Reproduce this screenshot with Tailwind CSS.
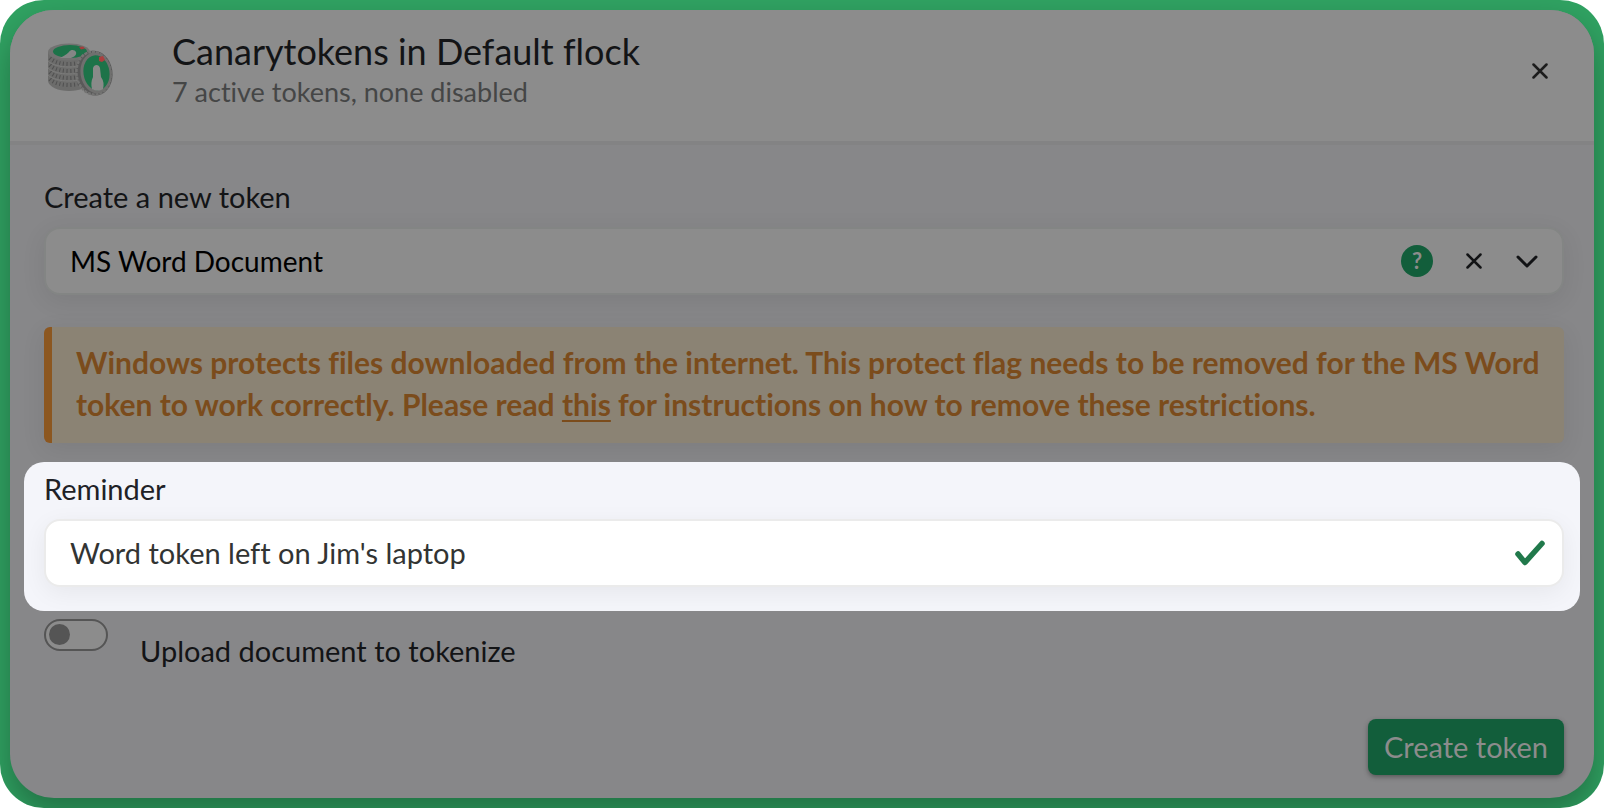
<!DOCTYPE html>
<html lang="en">
<head>
    <meta charset="UTF-8">
    <meta name="viewport" content="width=device-width, initial-scale=1.0">
    <title>Canarytokens</title>
    <script src="https://cdn.jsdelivr.net/npm/@tailwindcss/browser@4"></script>
</head>
<body class="bg-white font-['Lato',sans-serif] [font-variant-ligatures:none] text-[29px] leading-[42px] text-[#131416]">
    <div class="min-h-screen flex flex-col p-[10px] rounded-[44px] overflow-hidden bg-[#30a262]">
        <main class="flex-1 flex flex-col rounded-[44px] bg-[#878789] shadow-[0_16px_32px_rgba(0,0,0,0.3)]">
            <!-- Header -->
            <header class="flex items-start bg-[#8c8c8c] border-b-4 border-[#838384] rounded-t-[44px] pl-9 pr-[46px] h-[135px] shrink-0">
                <svg class="w-[70px] h-[58px] mt-[31px] shrink-0" viewBox="0 0 70 58" aria-hidden="true">
                    <!-- stack of coins -->
                    <path d="M2 11v29c1 6 10 10 21 10s20-4 21-10V11z" fill="#6c6c6b"/>
                    <g fill="none" stroke="#505050" stroke-width="4" stroke-dasharray="1 2.6">
                        <path d="M4 17c4 4 11 6 19 6s15-2 19-6"/>
                        <path d="M4 24c4 4 11 6 19 6s15-2 19-6"/>
                        <path d="M4 31c4 4 11 6 19 6s15-2 19-6"/>
                        <path d="M4 38c4 4 11 6 19 6s15-2 19-6"/>
                    </g>
                    <g fill="none" stroke="#7c7c7b" stroke-width="1">
                        <path d="M2 20c4 4 12 6 21 6s17-2 21-6"/>
                        <path d="M2 27c4 4 12 6 21 6s17-2 21-6"/>
                        <path d="M2 34c4 4 12 6 21 6s17-2 21-6"/>
                    </g>
                    <ellipse cx="23" cy="11" rx="21" ry="8.5" fill="#727271"/>
                    <ellipse cx="24" cy="10.500" rx="17" ry="6.500" fill="#1d7349"/>
                    <path d="M14 17c3-2 6-3 9-6 2-3 6-2 7 0 1 3-2 5-5 6z" fill="#868686"/>
                    <path d="M33 6l4-.5 2 2-4 1z" fill="#a33c3c"/>
                    <!-- coin in front -->
                    <g transform="rotate(-8 49 32)">
                        <ellipse cx="48.500" cy="32" rx="18" ry="22.500" fill="#595959"/>
                        <ellipse cx="47.500" cy="32" rx="17" ry="21.500" fill="none" stroke="#747473" stroke-width="2.500" stroke-dasharray="3 1"/>
                        <ellipse cx="50" cy="32" rx="15.500" ry="20.500" fill="#70706f"/>
                        <ellipse cx="50.500" cy="32" rx="13" ry="17.500" fill="#1d7349"/>
                    </g>
                    <path d="M47 27c1-4 6-4 7 0l1 9c3 4 3 8 2 12-3 2-7 2-11 0-1-4-1-8 1-12z" fill="#8a8a89"/>
                    <path d="M53 16l4-1 2 4-3 2-3-1z" fill="#ad3e3e"/>
                </svg>
                <div class="flex-1 ml-14 mt-5">
                    <h1 class="text-[36px] leading-[42px]">Canarytokens in Default flock</h1>
                    <p class="text-[27px] leading-10 text-[#454646]">7 active tokens, none disabled</p>
                </div>
                <button class="mt-[53px] p-0" aria-label="Close">
                    <svg class="w-4 h-4" viewBox="0 0 16 16" fill="none" stroke="#1c1c1c" stroke-width="2.500" stroke-linecap="round"><path d="M1.500 1.500l13 13M14.500 1.500l-13 13"/></svg>
                </button>
            </header>

            <form class="flex-1 flex flex-col pl-[34px] pr-[30px] pt-[31px]" onsubmit="return false">
                <!-- Token type -->
                <label for="token-type">Create a new token</label>
                <div class="grid items-center mt-[9px] rounded-2xl bg-[#8c8c8c] border-2 border-[#838584] shadow-[0_6px_24px_rgba(0,0,0,0.08)]">
                    <select id="token-type" class="col-start-1 row-start-1 appearance-none w-full h-16 pl-6 pr-44 text-[28px] text-black outline-none">
                        <option>MS Word Document</option>
                    </select>
                    <div class="col-start-1 row-start-1 justify-self-end flex items-center pr-6">
                        <button type="button" class="grid place-items-center w-8 h-8 rounded-full bg-[#125e3b] text-[#8c8c8c] text-[22px] leading-8 font-bold" aria-label="Help">?</button>
                        <button type="button" class="ml-[33px]" aria-label="Clear">
                            <svg class="w-4 h-4" viewBox="0 0 16 16" fill="none" stroke="#121315" stroke-width="2.500" stroke-linecap="round"><path d="M1.500 1.500l13 13M14.500 1.500l-13 13"/></svg>
                        </button>
                        <svg class="ml-[34px] w-[22px] h-[14px]" viewBox="0 0 22 14" fill="none" stroke="#121315" stroke-width="3" stroke-linecap="round" stroke-linejoin="round"><path d="M2 3l9 9 9-9"/></svg>
                    </div>
                </div>

                <div class="mt-8 px-6 pt-[14px] pb-[18px] rounded-md border-l-8 border-[#8c5720] bg-[#8b8374] shadow-[0_6px_24px_rgba(0,0,0,0.08)] text-[30px] font-bold text-[#7b4c1c]">
                    Windows protects files downloaded from the internet. This protect flag needs to be removed for the MS Word token to work correctly. Please read <a href="#" class="underline decoration-2 underline-offset-4">this</a> for instructions on how to remove these restrictions.
                </div>

                <!-- Highlighted step -->
                <div class="flex flex-col mt-[19px] -ml-5 -mr-4 pl-5 pr-4 pt-[6px] pb-6 rounded-[20px] bg-[#f4f5fa] text-[#202126]">
                    <label for="reminder">Reminder</label>
                    <div class="grid items-center mt-[9px] rounded-2xl bg-white border-2 border-[#ebebeb] shadow-[0_6px_24px_rgba(0,0,0,0.06)]">
                        <input id="reminder" type="text" value="Word token left on Jim's laptop" class="col-start-1 row-start-1 w-full h-16 pl-6 pr-16 pb-[2px] text-[#323433] outline-none">
                        <svg class="col-start-1 row-start-1 justify-self-end mr-4 w-8 h-7" viewBox="0 0 32 28" fill="none" stroke="#21794b" stroke-width="5.500" stroke-linecap="round" stroke-linejoin="round"><path d="M4 15l7 8.500L28 4.500"/></svg>
                    </div>
                </div>

                <div class="flex items-start mt-2">
                    <input id="upload" type="checkbox" role="switch" class="appearance-none w-16 h-8 rounded-full border-2 border-[#555] bg-[#8c8c8c] before:block before:w-[21px] before:h-[21px] before:mt-[3px] before:ml-[3px] before:rounded-full before:bg-[#555]">
                    <label for="upload" class="ml-8 mt-[11px]">Upload document to tokenize</label>
                </div>

                <button class="self-end mt-auto mb-[23px] h-14 px-4 rounded-lg bg-[#125e3b] text-[#8c8c8c] shadow-[0_2px_5px_rgba(0,0,0,0.35)]">Create token</button>
            </form>
        </main>
    </div>
</body>
</html>
